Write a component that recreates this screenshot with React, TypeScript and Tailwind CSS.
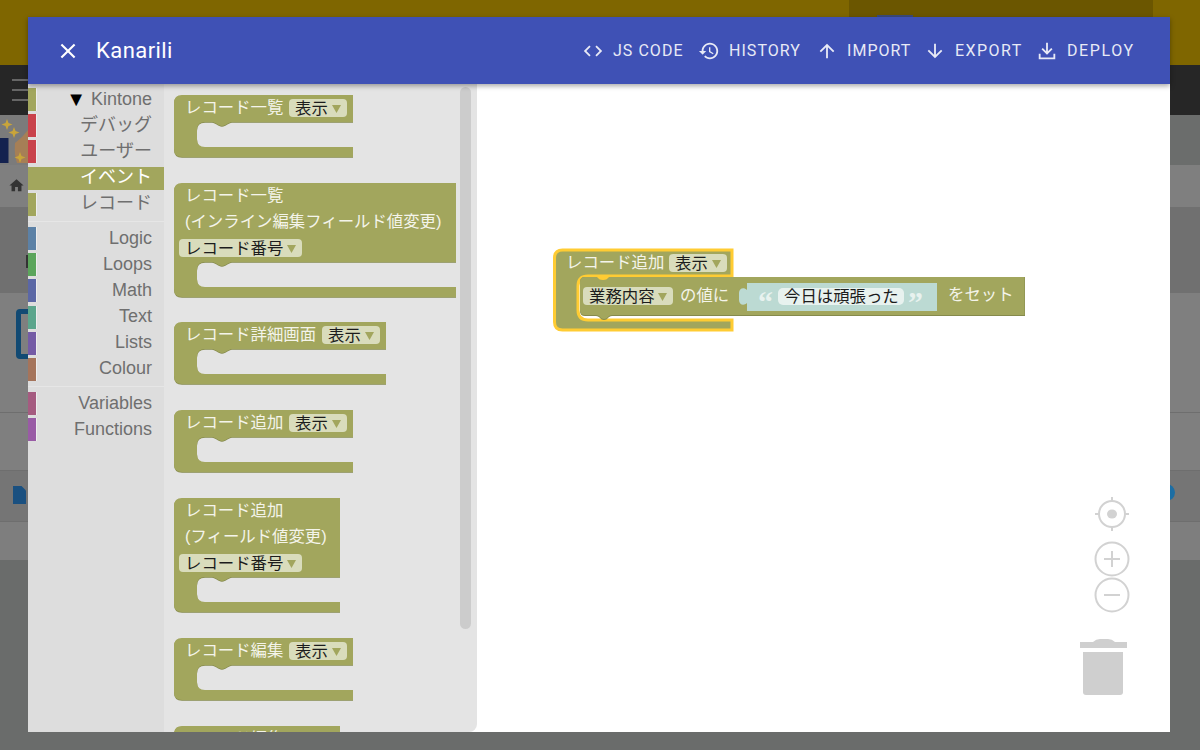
import * as React from "react"

const JP = "font-['Liberation_Sans','Noto_Sans_CJK_JP',sans-serif]"
const OLIVE = "#a2a65d"
const OLIVE_DARK = "#858a4c"
const FIELD = "#d9dcbc"

const toolbox = [
  { label: "Kintone", color: "bg-[#a2a65d]", open: true },
  { label: "デバッグ", color: "bg-[#c9424b]" },
  { label: "ユーザー", color: "bg-[#c9424b]" },
  { label: "イベント", color: "bg-[#a2a65d]", selected: true },
  { label: "レコード", color: "bg-[#a2a65d]", sep: true },
  { label: "Logic", color: "bg-[#5c81a6]" },
  { label: "Loops", color: "bg-[#5ba55b]" },
  { label: "Math", color: "bg-[#5b67a5]" },
  { label: "Text", color: "bg-[#5ba58c]" },
  { label: "Lists", color: "bg-[#745ba5]" },
  { label: "Colour", color: "bg-[#a5745b]", sep: true },
  { label: "Variables", color: "bg-[#a55b80]" },
  { label: "Functions", color: "bg-[#995ba5]" },
]

const actions = [
  { label: "JS CODE", width: "w-[71px]", tracking: "tracking-[0.065em]", path: "M9.4 16.6L4.8 12l4.6-4.6L8 6l-6 6 6 6 1.4-1.4zm5.2 0l4.6-4.6-4.6-4.6L16 6l6 6-6 6-1.4-1.4z" },
  { label: "HISTORY", width: "w-[73px]", tracking: "tracking-[0.065em]", path: "M13 3c-4.97 0-9 4.03-9 9H1l3.89 3.89.07.14L9 12H6c0-3.87 3.13-7 7-7s7 3.13 7 7-3.13 7-7 7c-1.93 0-3.68-.79-4.94-2.06l-1.42 1.42C8.27 19.99 10.51 21 13 21c4.97 0 9-4.03 9-9s-4.03-9-9-9zm-1 5v5l4.28 2.54.72-1.21-3.5-2.08V8H12z" },
  { label: "IMPORT", width: "w-[63px]", tracking: "tracking-[0.065em]", path: "M4 12l1.41 1.41L11 7.83V20h2V7.83l5.58 5.59L20 12l-8-8-8 8z" },
  { label: "EXPORT", width: "w-[67px]", tracking: "tracking-[0.09em]", path: "M20 12l-1.41-1.41L13 16.17V4h-2v12.17l-5.58-5.59L4 12l8 8 8-8z" },
  { label: "DEPLOY", width: "w-[67px]", tracking: "tracking-[0.1em]", path: "M11 3h2v9.2l3.6-3.6L18 10l-6 6-6-6 1.4-1.4 3.6 3.6V3zM3 15h2v4h14v-4h2v6H3v-6z" },
]

// the C shape of an event block, top = height of the label part
function hatPath(w: number, top: number) {
  const b = top + 25
  return `M0,8 Q0,0 8,0 H${w} V${top} H58 c-2,0 -3,1 -5,2 c-1.5,.8 -3,2 -5,2 s-3.5,-1.2 -5,-2 c-2,-1 -3,-2 -5,-2 H31 Q23,${top} 23,${top + 8} V${b - 8} Q23,${b} 31,${b} H${w} V${b + 10} H8 Q0,${b + 10} 0,${b + 2} Z`
}

function Field({ x, y, w, label }: { x: number; y: number; w: number; label: string }) {
  const r = x + w - 11
  return (
    <g>
      <rect x={x} y={y} width={w} height={18} rx={4} fill={FIELD} />
      <text x={x + 6} y={y + 14.5} fontSize={16.4} fill="#1c1c1c">{label}</text>
      <polygon points={`${r - 4},${y + 6} ${r + 5},${y + 6} ${r + 0.5},${y + 14}`} fill={OLIVE} />
    </g>
  )
}

function Label({ x, y, children }: { x: number; y: number; children: React.ReactNode }) {
  return <text x={x} y={y} fontSize={16.4} fill="#f4f4ea">{children}</text>
}

function Block({ w, top = 27, h, children }: { w: number; top?: number; h?: number; children: React.ReactNode }) {
  return (
    <svg width={w} height={h ?? top + 37} className={`block shrink-0 ${JP}`}>
      <path d={hatPath(w, top)} transform="translate(0 .8)" fill={OLIVE_DARK} />
      <path d={hatPath(w, top)} fill={OLIVE} />
      {children}
    </svg>
  )
}

function Flyout() {
  return (
    <div className="relative w-[313px] shrink-0 overflow-hidden rounded-br-lg bg-[#e4e4e4] pl-[10px] pt-[11px]">
      <div className="flex flex-col gap-[24px]">
        <Block w={179}>
          <Label x={11} y={18}>レコード一覧</Label>
          <Field x={115} y={4} w={58} label="表示" />
        </Block>
        <Block w={282} top={79} h={115}>
          <Label x={11} y={18}>レコード一覧</Label>
          <Label x={11} y={44}>(インライン編集フィールド値変更)</Label>
          <Field x={5} y={56} w={123} label="レコード番号" />
        </Block>
        <Block w={212}>
          <Label x={11} y={18}>レコード詳細画面</Label>
          <Field x={148} y={4} w={58} label="表示" />
        </Block>
        <Block w={179}>
          <Label x={11} y={18}>レコード追加</Label>
          <Field x={115} y={4} w={58} label="表示" />
        </Block>
        <Block w={166} top={79}>
          <Label x={11} y={18}>レコード追加</Label>
          <Label x={11} y={44}>(フィールド値変更)</Label>
          <Field x={5} y={56} w={123} label="レコード番号" />
        </Block>
        <Block w={179}>
          <Label x={11} y={18}>レコード編集</Label>
          <Field x={115} y={4} w={58} label="表示" />
        </Block>
        <Block w={166}>
          <Label x={11} y={18}>レコード編集</Label>
        </Block>
      </div>
      <div className="absolute left-[296px] top-[3px] h-[542px] w-[11px] rounded-md bg-[#cccccc]" />
    </div>
  )
}

function Toolbox() {
  return (
    <div className={`w-[136px] shrink-0 bg-[#dddddd] pt-[2.5px] text-[18px] leading-[26px] text-[#6f6f6f] ${JP}`}>
      {toolbox.map((t) => (
        <React.Fragment key={t.label}>
          <div className="flex h-[26.2px] items-center">
            <div className={`flex h-[23px] w-full items-center ${t.selected ? "bg-[#a2a65d] text-white" : ""}`}>
              <div className={`h-full w-[9px] shrink-0 ${t.color} ${t.selected ? "" : "border-r border-[#eeeeee]"}`} />
              <div className="flex flex-1 items-center justify-end pb-[2px] pr-[12px]">
                {t.open && <span className="mr-[5px] text-[20px] text-black">▼</span>}
                <span>{t.label}</span>
              </div>
            </div>
          </div>
          {t.sep && <div className="my-[3.5px] h-px bg-[#e6e6e6]" />}
        </React.Fragment>
      ))}
    </div>
  )
}

function PlacedBlocks() {
  return (
    <svg viewBox="547 244 490 95" className={`absolute left-[70px] top-[160px] h-[95px] w-[490px] ${JP}`}>
      <path
        d="M554.5,258 Q554.5,250 562.5,250 H732 V276 H588 Q578,276 578,286 V310 Q578,320 588,320 H732 V330 H562.5 Q554.5,330 554.5,322 Z"
        fill={OLIVE}
        stroke="#ffcc33"
        strokeWidth={3}
      />
      <Label x={566} y={268}>レコード追加</Label>
      <Field x={669} y={254} w={58} label="表示" />
      <path
        d="M585,277 H1025 V316 H612 c-2,0 -3,1 -4,2 c-1,1 -2,2 -4,2 s-3,-1 -4,-2 c-1,-1 -2,-2 -4,-2 H585 Q580,316 580,311 V282 Q580,277 585,277 Z"
        fill={OLIVE_DARK}
      />
      <path
        d="M585,277 H1024.5 V315 H612 c-2,0 -3,1 -4,2 c-1,1 -2,2 -4,2 s-3,-1 -4,-2 c-1,-1 -2,-2 -4,-2 H585 Q580,315 580,310 V282 Q580,277 585,277 Z"
        fill={OLIVE}
      />
      <path d="M594,276 c2,0 3,1 4,2 c1,1 2,2 5,2 s4,-1 5,-2 c1,-1 2,-2 4,-2 Z" fill="#ffcc33" />
      <Field x={583} y={287} w={90} label="業務内容" />
      <Label x={680} y={301}>の値に</Label>
      <path d="M747,283 H937 V311 H747 V303 c-3,3 -8,2 -8,-3 V293 c0,-5 5,-6 8,-3 Z" fill="#bcdad3" />
      <text x={758} y={312} fontSize={30} fontWeight={700} className="font-['Liberation_Serif',serif]" fill="#e8f2ef">“</text>
      <rect x={778} y={288} width={126} height={17} rx={5} fill="#e8f2ef" />
      <text x={784} y={301.5} fontSize={16.4} fill="#1c1c1c">今日は頑張った</text>
      <text x={908} y={312} fontSize={30} fontWeight={700} className="font-['Liberation_Serif',serif]" fill="#e8f2ef">”</text>
      <Label x={948} y={300}>をセット</Label>
    </svg>
  )
}

function Controls() {
  return (
    <div className="absolute left-[600px] top-[412px]">
      <svg width={56} height={204} viewBox="0 0 56 204" fill="none" stroke="#d2d2d2" strokeWidth={2} className="block">
        <circle cx={35} cy={18} r={13} />
        <ellipse cx={35} cy={18} rx={5} ry={4.5} fill="#d2d2d2" stroke="none" />
        <path d="M35 1v5M35 30v5M18 18h5M47 18h5" />
        <circle cx={35} cy={63} r={16.5} />
        <path d="M27 63h16M35 55v16" />
        <circle cx={35} cy={99} r={16.5} />
        <path d="M27 99h16" />
        <g fill="#cfcfcf" stroke="none">
          <path d="M3 146 H16 Q19 143 23 143 H31 Q35 143 38 146 H50 V152 H3 Z" />
          <path d="M6 156 H46 V196 Q46 199 43 199 H9 Q6 199 6 196 Z" />
        </g>
      </svg>
    </div>
  )
}

function Backdrop() {
  return (
    <div>
      <div className="h-[65px] bg-[#7f6600]">
        <div className="ml-[849px] h-[17px] w-[304px] bg-[#6b5600]">
          <div className="ml-[28px] w-[36px] pt-[15px]"><div className="h-[2px] bg-[#3b4a7a]" /></div>
        </div>
      </div>
      <div className="flex h-[50px] flex-col gap-[8px] bg-[#262626] pl-[12px] pt-[14px]">
        <div className="h-[2px] w-[16px] bg-[#666666]" />
        <div className="h-[2px] w-[16px] bg-[#666666]" />
        <div className="h-[2px] w-[16px] bg-[#666666]" />
      </div>
      <div className="h-[50px] bg-[#6b6d6c]">
        <svg width={28} height={50} className="block bg-[#7b7b7b]">
          <rect x={0} y={23} width={8.5} height={25} fill="#14224f" />
          <path d="M15 28 L22 22 L28 15 V48 H17 Q14 40 15 28 Z" fill="#a67f56" />
          <g fill="#c9a53a">
            <path d="M7 4 l1.5 4 4 1.5 -4 1.5 -1.5 4 -1.5 -4 -4 -1.5 4 -1.5 Z" />
            <path d="M14 12 l1.5 4 4 1.5 -4 1.5 -1.5 4 -1.5 -4 -4 -1.5 4 -1.5 Z" />
            <path d="M20 37 l1.5 4 4 1.5 -4 1.5 -1.5 4 -1.5 -4 -4 -1.5 4 -1.5 Z" />
          </g>
        </svg>
      </div>
      <div className="h-[42px] bg-[#7f7f7f] pl-[8px] pt-[12px]">
        <svg width={17} height={17} viewBox="0 0 24 24" fill="#333333" className="block">
          <path d="M10 20v-6h4v6h5v-8h3L12 3 2 12h3v8z" />
        </svg>
      </div>
      <div className="h-[86px] bg-[#707070] pl-[26px] pt-[48px]">
        <div className="h-[13px] w-[2px] bg-[#333333]" />
      </div>
      <div className="h-[120px] border-b border-[#6e6e6e] bg-[#7f7f7f] pl-[16px] pt-[16px]">
        <div className="h-[50px] w-[20px] rounded-[4px] border-[5px] border-[#124a73]" />
      </div>
      <div className="h-[57px] bg-[#7f7f7f]" />
      <div className="flex h-[52px] justify-between border-y border-[#6e6e6e] bg-[#757575] pl-[13px] pr-[25px] pt-[15px]">
        <svg width={13} height={18} viewBox="0 0 13 18" fill="#1a5080" className="block">
          <path d="M0 0 H8.5 L13 4.5 V18 H0 Z" />
        </svg>
        <div className="mt-[-2px] h-[17px] w-[17px] rounded-full bg-[#1c6ea4]" />
      </div>
      <div className="h-[38px] bg-[#7e7e7e]" />
      <div className="h-[190px] bg-[#6a6c6b]" />
    </div>
  )
}

export default function App() {
  return (
    <div className="relative h-[750px] w-[1200px] overflow-hidden">
      <Backdrop />

      <div className="absolute left-[28px] top-[17px] flex h-[715px] w-[1142px] flex-col bg-white">
        <div className="relative z-10 flex h-[67px] shrink-0 items-center gap-[14px] bg-[#3f51b5] pl-[28px] pr-[36px] font-['Roboto',sans-serif] text-white shadow-[0_2px_5px_rgba(0,0,0,0.35)]">
          <svg width={24} height={24} viewBox="0 0 24 24" fill="currentColor" className="mr-[2px] shrink-0 scale-[1.05]">
            <path d="M19 6.41L17.59 5 12 10.59 6.41 5 5 6.41 10.59 12 5 17.59 6.41 19 12 13.41 17.59 19 19 17.59 13.41 12z" />
          </svg>
          <div className="flex-1 text-[22px] tracking-[0.02em]">Kanarili</div>
          {actions.map((a) => (
            <div key={a.label} className={`flex items-center gap-[9px] text-[16px] text-[#e8eaf6] ${a.tracking}`}>
              <svg width={22} height={22} viewBox="0 0 24 24" fill="currentColor" className="shrink-0">
                <path d={a.path} />
              </svg>
              <span className={`whitespace-nowrap ${a.width}`}>{a.label}</span>
            </div>
          ))}
        </div>

        <div className="flex min-h-0 flex-1">
          <Toolbox />
          <Flyout />
          <div className="relative flex-1 bg-white">
            <PlacedBlocks />
            <Controls />
          </div>
        </div>
      </div>
    </div>
  )
}
